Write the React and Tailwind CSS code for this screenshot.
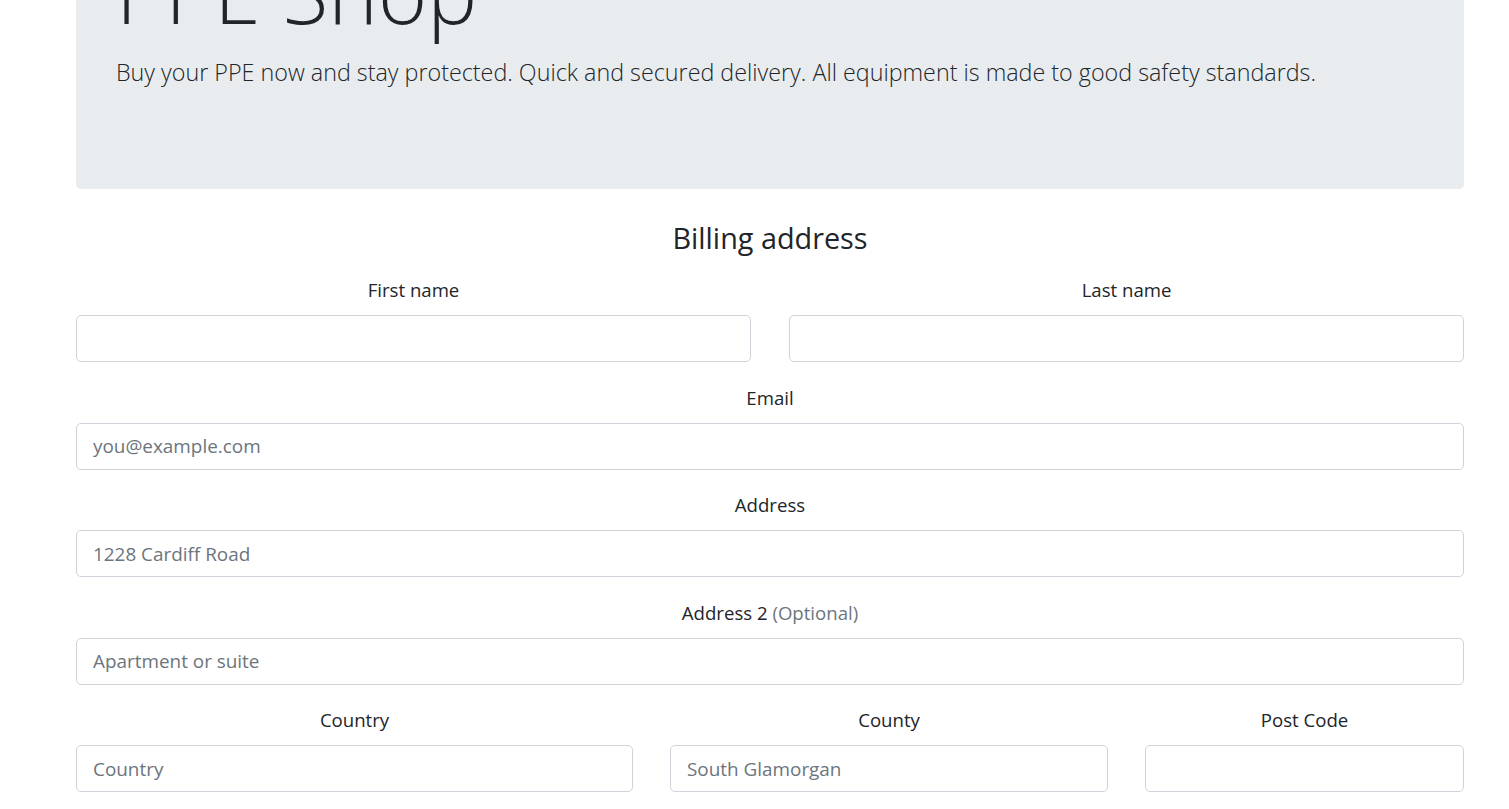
const font = { fontFamily: '"Open Sans", "Liberation Sans", sans-serif' };

const Field = ({ label, optional, placeholder }) => (
  <div className="mb-[21.75px] flex flex-col">
    <label className="mb-[10px] text-center text-[18.6px] leading-[28.8px] text-[#212529]">
      {label}
      {optional && <span className="text-[#6c757d]"> (Optional)</span>}
    </label>
    <input
      type="text"
      placeholder={placeholder}
      className="h-[47px] w-full rounded-[5px] border border-[#ced4da] bg-white px-4 text-[18.9px] text-[#495057] outline-none placeholder:text-[#6c757d]"
    />
  </div>
);

export default function App() {
  return (
    <div className="min-h-screen bg-white" style={font}>
      <div className="ml-[76px] w-[1388px]">
        {/* Jumbotron */}
        <div className="-mt-[137px] rounded-b-[5px] bg-[#e9ecef] px-10 pt-[79px] pb-[99px] text-[#212529]">
          <h1 className="mb-[12px] text-[84px] font-light leading-[1.2]">PPE Shop</h1>
          <p className="text-[23.3px] font-light leading-[1.5]">
            Buy your PPE now and stay protected. Quick and secured delivery. All equipment is made to good safety standards.
          </p>
        </div>

        <h4 className="mt-[32px] mb-[21px] text-center text-[28.8px] leading-[1.2] text-[#212529]">
          Billing address
        </h4>

        <form>
          <div className="grid grid-cols-2 gap-x-[38px]">
            <Field label="First name" />
            <Field label="Last name" />
          </div>
          <Field label="Email" placeholder="you@example.com" />
          <Field label="Address" placeholder="1228 Cardiff Road" />
          <Field label="Address 2" optional placeholder="Apartment or suite" />
          <div className="grid grid-cols-[557px_438px_1fr] gap-x-[37px]">
            <Field label="Country" placeholder="Country" />
            <Field label="County" placeholder="South Glamorgan" />
            <Field label="Post Code" />
          </div>
        </form>
      </div>
    </div>
  );
}
